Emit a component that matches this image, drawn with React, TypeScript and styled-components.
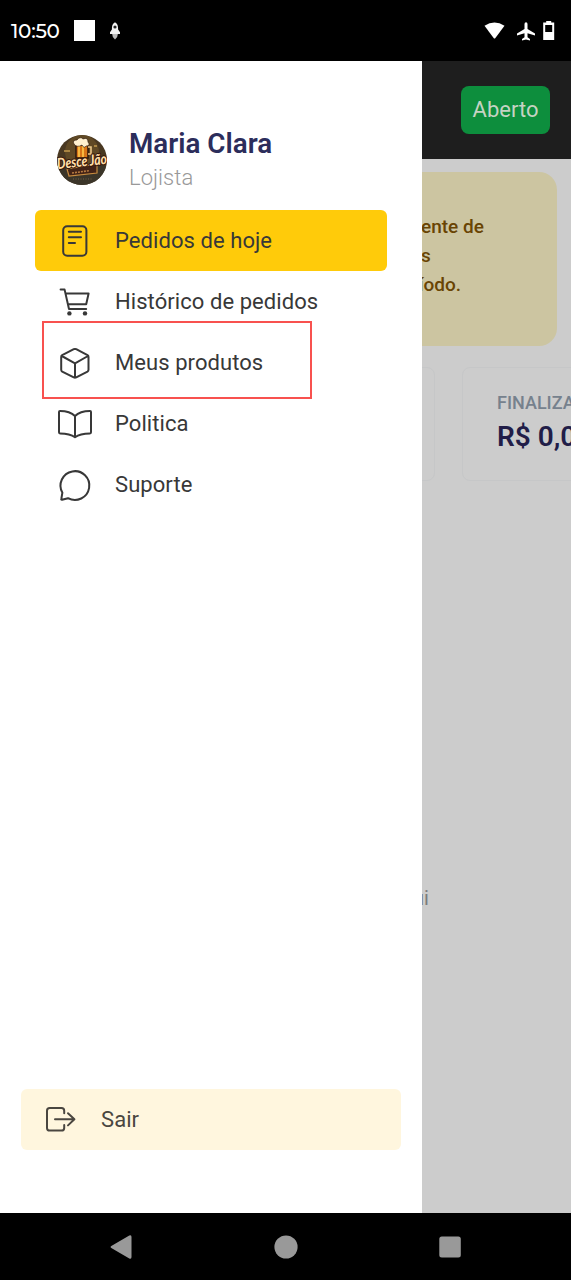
import React from "react";
import styled, { createGlobalStyle } from "styled-components";

const GlobalStyle = createGlobalStyle`
  * { box-sizing: border-box; }
  body { margin: 0; background: #000; font-family: Roboto, "Liberation Sans", sans-serif; }
`;

const Screen = styled.div`
  width: 571px;
  height: 1280px;
  display: flex;
  flex-direction: column;
  overflow: hidden;
  background: #000;
`;

const StatusBar = styled.header`
  height: 61px;
  flex: none;
  display: flex;
  align-items: center;
  padding: 0 16px 0 11px;
  color: #fff;
`;

const Clock = styled.span`
  width: 63px;
  font: 500 20px Montserrat, Inter, sans-serif;
  letter-spacing: -0.3px;
  white-space: nowrap;
`;

const Notice = styled.span`
  width: 21px;
  height: 21px;
  background: #fff;
`;

const RocketGlyph = styled.svg`
  width: 12px;
  height: 20px;
  margin-left: 14px;
`;

const StatusIcons = styled.div`
  display: flex;
  margin-left: auto;
`;

const Body = styled.div`
  height: 1152px;
  flex: none;
  display: flex;
`;

const Drawer = styled.aside`
  width: 422px;
  flex: none;
  display: flex;
  flex-direction: column;
  background: #fff;
  padding: 66px 21px 63.5px;
`;

const Profile = styled.div`
  height: 83px;
  flex: none;
  padding-left: 36px;
  display: flex;
  gap: 22px;
`;

const Avatar = styled.svg`
  width: 50px;
  height: 50px;
  margin-top: 8px;
  border-radius: 50%;
  flex: none;
`;

const Name = styled.div`
  font-size: 27.8px;
  font-weight: 600;
  line-height: 34px;
  color: #2c2d5b;
  white-space: nowrap;
`;

const Role = styled.div`
  font-size: 22px;
  font-weight: 300;
  line-height: 33px;
  letter-spacing: 0.05px;
  color: #999;
`;

const Menu = styled.nav`
  margin: 0 14px;
  display: flex;
  flex-direction: column;
`;

const Item = styled.a<{ $tone?: string }>`
  position: relative;
  height: 61px;
  flex: none;
  display: flex;
  align-items: center;
  gap: 22px;
  padding-left: 22px;
  border-radius: 6px;
  font-size: 22px;
  letter-spacing: 0.07px;
  color: #383838;
  white-space: nowrap;
  background: ${(p) => p.$tone ?? "transparent"};
`;

const Logout = styled(Item)`
  margin-top: auto;
  padding-left: 21px;
  gap: 23px;
  color: #4a4640;
`;

const Highlight = styled.span`
  position: absolute;
  left: 7px;
  top: -11px;
  width: 270px;
  height: 78px;
  border: 2px solid #f8514f;
`;

const Icon = styled.svg`
  width: 36px;
  height: 36px;
  flex: none;
  fill: none;
  stroke: currentColor;
  stroke-width: 2;
  stroke-linecap: round;
  stroke-linejoin: round;
`;

const Page = styled.main`
  width: 149px;
  flex: none;
  overflow: hidden;
  background: #ccc;
  display: flex;
  flex-direction: column;
`;

const TopBar = styled.div`
  height: 98px;
  flex: none;
  display: flex;
  align-items: center;
  justify-content: flex-end;
  padding-right: 21px;
  background: #1e1e1e;
`;

const OpenBadge = styled.div`
  width: 89px;
  height: 48px;
  border-radius: 8px;
  background: #0d8e3d;
  color: #c5d3c3;
  font-size: 22px;
  line-height: 47px;
  text-align: center;
`;

const Warning = styled.div`
  width: 135px;
  height: 174px;
  flex: none;
  margin-top: 13px;
  padding-top: 39.5px;
  border-radius: 0 18px 18px 0;
  background: #ccc5a1;
  color: #694403;
  font-size: 19px;
  font-weight: 500;
  line-height: 29px;
  overflow: hidden;
`;

const WarningLine = styled.div<{ $shift: number }>`
  margin-left: ${(p) => p.$shift}px;
  white-space: nowrap;
`;

const Stats = styled.div`
  display: flex;
  gap: 27px;
  margin: 21px 0 0 -23px;
`;

const StatCard = styled.div<{ $w: number }>`
  width: ${(p) => p.$w}px;
  height: 114px;
  flex: none;
  border: 1px solid #c6c7c8;
  border-radius: 8px;
  padding: 22px 0 0 34px;
  white-space: nowrap;
`;

const StatLabel = styled.div`
  font-size: 18px;
  font-weight: 500;
  line-height: 26px;
  color: #76818d;
`;

const StatValue = styled.div`
  font-size: 28px;
  font-weight: 600;
  line-height: 41px;
  color: #211d48;
`;

const Hint = styled.div`
  margin: 404px 0 0 -9px;
  font-size: 20px;
  line-height: 26px;
  color: #7c7c7c;
`;

const NavBar = styled.footer`
  flex: 1;
  display: flex;
  align-items: center;
  justify-content: space-between;
  padding: 0 109px;
`;

const DocIcon = () => (
  <Icon viewBox="0 0 36 36">
    <rect x="6.2" y="3.3" width="23.2" height="29.4" rx="4" />
    <path d="M11.8 8.7H24M11.8 14.3H24M11.8 20H18" />
  </Icon>
);
const CartIcon = () => (
  <Icon viewBox="0 0 36 36">
    <path d="M3.6 5.6H7.6L12 25H29.2M8.6 9.5H31.6L29.2 20.3H11" />
    <circle cx="12.4" cy="29.4" r="2.2" fill="currentColor" stroke="none" />
    <circle cx="28" cy="29.4" r="2.2" fill="currentColor" stroke="none" />
  </Icon>
);
const BoxIcon = () => (
  <Icon viewBox="0 0 36 36">
    <path d="M16.8 4.2Q18 3.6 19.2 4.2L30.5 10.2Q31.5 10.8 31.5 12V24.8Q31.5 26 30.5 26.6L19.2 32.4Q18 33 16.8 32.4L5.2 26.6Q4.2 26 4.2 24.8V12Q4.2 10.8 5.2 10.2ZM4.8 11L18 18.3L31 11M18 18.3V32.5" />
  </Icon>
);
const BookIcon = () => (
  <Icon viewBox="0 0 36 36">
    <path d="M18 10Q13 5 3 5Q2 5 2 6V26.3Q2 27.4 3 27.4Q13 27.4 18 31.2Q23 27.4 33 27.4Q34 27.4 34 26.3V6Q34 5 33 5Q23 5 18 10V31" />
  </Icon>
);
const ChatIcon = () => (
  <Icon viewBox="0 0 36 36">
    <path d="M5.4 25.7A14.4 14.4 0 1 1 11 31.2L5 32.8Q4 33 4.3 32Z" />
  </Icon>
);
const ExitIcon = () => (
  <Icon viewBox="0 0 36 36">
    <path d="M22.2 12.3V9.7Q22.2 7 19.5 7H7.7Q5 7 5 9.7V26.9Q5 29.6 7.7 29.6H19.5Q22.2 29.6 22.2 26.9V24M13 18.3H32M26 12.3L32.4 18.3L26 24.4" />
  </Icon>
);

const Rocket = () => (
  <RocketGlyph viewBox="0 0 12 20">
    <path d="M6 1.2C3.4 2.6 2.8 5 2.9 8.6L1 11.2V13H11V11.2L9.1 8.6C9.2 5 8.6 2.6 6 1.2Z" fill="#f2f2f2" />
    <path d="M3.2 13H8.8L8.2 16L6 18.6L3.8 16Z" fill="#bbb" />
    <circle cx="6" cy="6" r="1.6" fill="#222" />
  </RocketGlyph>
);

const Logo = () => (
  <Avatar viewBox="0 0 50 50">
    <rect width="50" height="50" fill="#493821" />
    <circle cx="25" cy="17" r="17" fill="#604925" />
    <path d="M0 35Q25 26 50 31V50H0Z" fill="#3b3529" />
    <path d="M19 10H31V23H19Z" fill="#d87518" stroke="#2a160c" strokeWidth="1.5" />
    <path d="M22 11V22M26 11V22" stroke="#ffca4c" strokeWidth="1.6" />
    <path d="M31 12H34V19H31" fill="none" stroke="#ecc88a" strokeWidth="1.6" />
    <path d="M17 9Q15 5 20 5Q23 1 26 4Q31 2 31 7Q34 11 29 11Q27 14 25 10Q20 13 17 9Z" fill="#fff0cf" stroke="#2a160c" strokeWidth=".6" />
    <path d="M7 16H13M37 11H40" stroke="#c49b4d" strokeWidth="1.5" />
    <path d="M10 34L40 29V38L12 41Z" fill="#432316" stroke="#c68a3f" strokeWidth="1.2" />
    <text
      x="25"
      y="31.5"
      transform="rotate(-6 25 27)"
      fontFamily="Lato, sans-serif"
      fontStyle="italic"
      fontWeight="900"
      fontSize="15"
      textAnchor="middle"
      textLength="50"
      lengthAdjust="spacingAndGlyphs"
      fill="#ffdda8"
      stroke="#321509"
      strokeWidth="2"
      paintOrder="stroke"
    >
      Desce Jão
    </text>
    <path d="M15 38L32 35.7" stroke="#b77b42" strokeWidth="1.6" strokeDasharray="2 1" />
    <path d="M16 44H35" stroke="#74634a" strokeDasharray="1 1.5" />
  </Avatar>
);

export default function App() {
  return (
    <Screen>
      <GlobalStyle />
      <StatusBar>
        <Clock>10:50</Clock>
        <Notice />
        <Rocket />
        <StatusIcons>
          <svg width="72" height="22" viewBox="0 0 72 22" fill="#fff">
            <path d="M1.5 5.8Q11.5-1 21.5 5.8L12.2 18.2Q11.5 19 10.8 18.2Z" />
            <path d="M43 2.3Q44.5 2.3 44.5 4V9L52 13.5V15.5L44.5 13.2V17.2L47 19V20.4L43 19.4L39 20.4V19L41.5 17.2V13.2L34 15.5V13.5L41.5 9V4Q41.5 2.3 43 2.3Z" />
            <path fillRule="evenodd" d="M63.2 1H68.2V2.5H71.2V20H60.2V2.5H63.2ZM62.2 5V12H69.2V5Z" />
          </svg>
        </StatusIcons>
      </StatusBar>
      <Body>
        <Drawer>
          <Profile>
            <Logo />
            <div>
              <Name>Maria Clara</Name>
              <Role>Lojista</Role>
            </div>
          </Profile>
          <Menu>
            <Item $tone="#ffcb0a"><DocIcon />Pedidos de hoje</Item>
            <Item><CartIcon />Histórico de pedidos</Item>
            <Item><BoxIcon />Meus produtos<Highlight /></Item>
            <Item><BookIcon />Politica</Item>
            <Item><ChatIcon />Suporte</Item>
          </Menu>
          <Logout $tone="#fff6de"><ExitIcon />Sair</Logout>
        </Drawer>
        <Page>
          <TopBar><OpenBadge>Aberto</OpenBadge></TopBar>
          <Warning>
            <WarningLine $shift={-1}>ente de</WarningLine>
            <WarningLine $shift={-1}>s</WarningLine>
            <WarningLine $shift={-3.5}>íodo.</WarningLine>
          </Warning>
          <Stats>
            <StatCard $w={35} />
            <StatCard $w={200}>
              <StatLabel>FINALIZA</StatLabel>
              <StatValue>R$ 0,0</StatValue>
            </StatCard>
          </Stats>
          <Hint>ui</Hint>
        </Page>
      </Body>
      <NavBar>
        <svg width="24" height="26" viewBox="0 0 24 26" fill="#999"><path d="M2.3 12L20.3 1.5Q22.5.5 22.5 3V23Q22.5 25.5 20.3 24.5L2.3 14Q.5 13 2.3 12Z" /></svg>
        <svg width="24" height="24" viewBox="0 0 24 24" fill="#999"><circle cx="12" cy="12" r="11.6" /></svg>
        <svg width="24" height="24" viewBox="0 0 24 24" fill="#999"><rect x="1.3" y="1.5" width="21.5" height="21" rx="2.5" /></svg>
      </NavBar>
    </Screen>
  );
}
